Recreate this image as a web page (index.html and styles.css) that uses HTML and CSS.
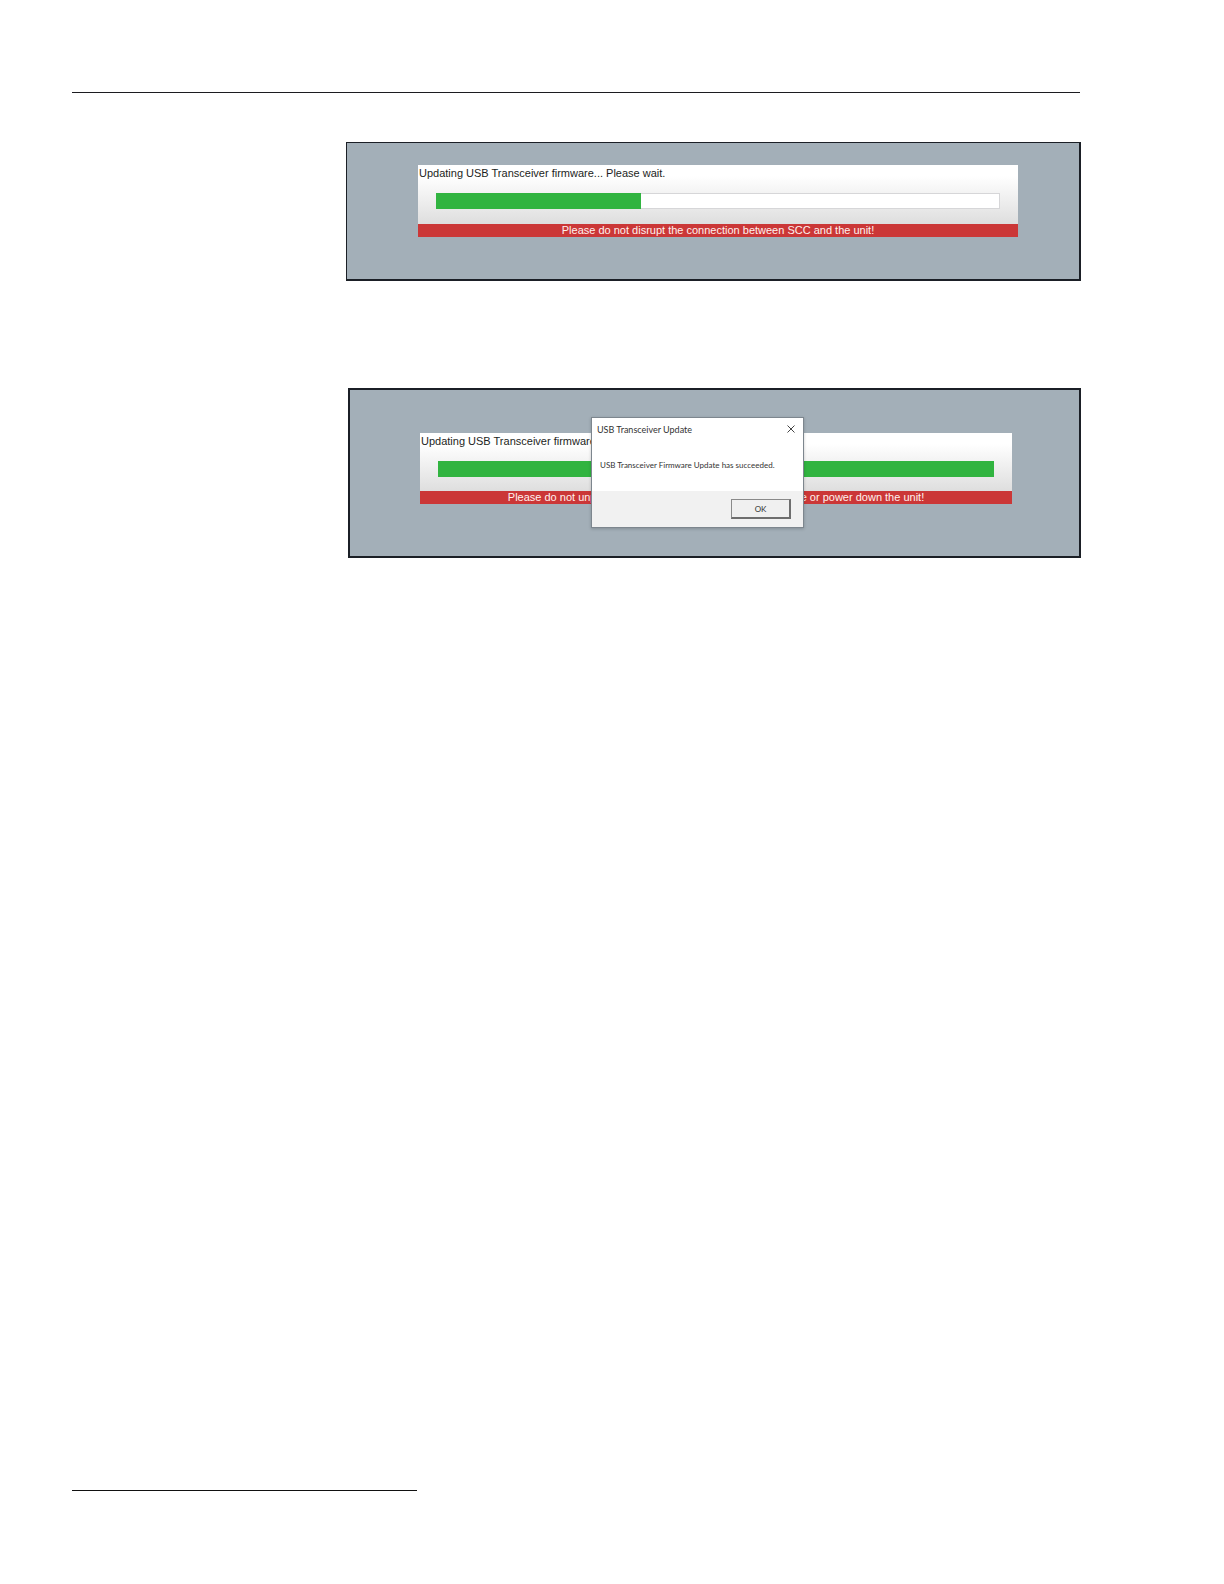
FILE: index.html
```html
<!DOCTYPE html>
<html lang="en">
<head>
    <meta charset="utf-8" />
    <title>USB Transceiver Update</title>
    <link rel="stylesheet" href="styles.css">
</head>
<body>
    <header class="top-rule"></header>
    <main>
        <section class="screen screen-progress">
            <div class="panel">
                <label for="update">Updating USB Transceiver firmware... Please wait.</label>
                <progress id="update" value="36.3" max="100"></progress>
                <p class="warning">Please do not disrupt the connection between SCC and the unit!</p>
            </div>
        </section>

        <section class="screen screen-done">
            <div class="panel">
                <label for="updated">Updating USB Transceiver firmware...</label>
                <progress id="updated" value="100" max="100"></progress>
                <p class="warning">Please do not unplug the USB Transceiver close the software or power down the unit!</p>
            </div>
            <div class="dialog" role="dialog" aria-labelledby="dialog-title">
                <div class="dialog-bar">
                    <h2 id="dialog-title">USB Transceiver Update</h2>
                    <button type="button" class="close" aria-label="Close">
                        <svg width="8" height="8" viewBox="0 0 8 8"><path d="M.5.5l7 7M7.5.5l-7 7" fill="none" stroke="#444" stroke-width="1" /></svg>
                    </button>
                </div>
                <p class="message">USB Transceiver Firmware Update has succeeded.</p>
                <div class="dialog-footer">
                    <button type="button" class="ok">OK</button>
                </div>
            </div>
        </section>
    </main>
    <footer class="bottom-rule"></footer>
</body>
</html>
```

FILE: styles.css
```css
*
{
    box-sizing: border-box;
    margin: 0;
    padding: 0;
}

body
{
    display: flex;
    flex-direction: column;
    min-height: 100vh;
    padding: 92px 143px 93px 72px;
    background: white;
    font-family: "Liberation Sans", Arial, sans-serif;
}

.top-rule
{
    margin-right: 1px;
    border-top: 1px solid #1c1c20;
}

.bottom-rule
{
    width: 345px;
    margin-top: auto;
    border-top: 1px solid #111;
}

main
{
    display: flex;
    flex-direction: column;
    align-items: flex-end;
    gap: 107px;
    padding: 49px 0 0 274px;
}

.screen
{
    position: relative;
    width: 100%;
    background: #a3afb8;
    border: 2px solid #1b1f26;
}

.screen-progress
{
    padding: 22px 61px 42px 71px;
    border-width: 1px 2px 2px 1px;
}

.screen-done
{
    width: calc(100% - 2px);
    padding: 43px 67px 52px 70px;
}

.screen-done progress
{
    margin-bottom: 14px;
}

.panel
{
    display: flex;
    flex-direction: column;
    background: linear-gradient(#fff 15%, #dedede 82%);
}

.panel label
{
    padding: 1px 1px 0;
    color: #1c1e22;
    font-size: 11px;
    line-height: 14px;
}

.panel progress
{
    appearance: none;
    -webkit-appearance: none;
    align-self: center;
    width: calc(100% - 36px);
    height: 16px;
    margin-top: 13px;
    background: white;
    border: 0;
}

.screen-progress progress
{
    margin-bottom: 15px;
}

.panel progress::-webkit-progress-bar
{
    background: white;
    box-shadow: inset 0 0 0 1px #d6d6d8;
}

.panel progress::-webkit-progress-value
{
    background: #31b440;
}

.warning
{
    height: 13px;
    background: #cb3737;
    color: #fff1ee;
    font-size: 11px;
    line-height: 13px;
    text-align: center;
    white-space: nowrap;
}

.dialog
{
    position: absolute;
    top: 27px;
    left: 241px;
    width: 213px;
    background: white;
    border: 1px solid #7d868e;
    color: #333;
    font-family: Lato, "Open Sans", sans-serif;
    font-size: 9px;
    box-shadow: 0 1px 3px rgba(0,0,0,.2);
}

.dialog-bar
{
    display: flex;
    align-items: center;
    justify-content: space-between;
    height: 22px;
    padding: 0 8px 0 5px;
}

.dialog-bar h2
{
    font-size: 9px;
    font-weight: normal;
}

.close
{
    display: flex;
    background: none;
    border: 0;
}

.message
{
    padding: 20px 8px;
    font-size: 8px;
    line-height: 11px;
}

.dialog-footer
{
    display: flex;
    justify-content: flex-end;
    padding: 8px 12px;
    background: #f1f1f1;
}

.ok
{
    width: 60px;
    height: 20px;
    background: #f0f0f0;
    border: 1px solid #8a8a8a;
    border-right: 2px solid #6e6e6e;
    border-bottom: 2px solid #6e6e6e;
    color: #333;
    font-family: inherit;
    font-size: 8px;
}
```
